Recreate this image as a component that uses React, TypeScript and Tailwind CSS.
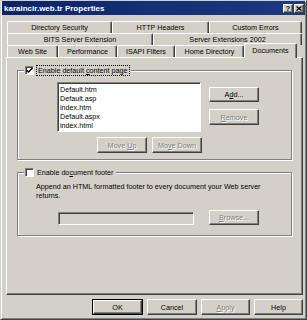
import React from "react";

const raised =
  "border border-t-white border-l-white border-r-[#404040] border-b-[#404040] shadow-[inset_-1px_-1px_0_#808080]";
const sunken =
  "border border-t-[#808080] border-l-[#808080] border-r-white border-b-white shadow-[inset_1px_1px_0_#404040]";
const dis = "text-[#808080] [text-shadow:1px_1px_0_#fff]";

function U({ pre, u, post }: { pre?: string; u?: string; post?: string }) {
  return (
    <span>
      {pre}
      {u ? <span className="underline underline-offset-1">{u}</span> : null}
      {post}
    </span>
  );
}

function Btn({
  children,
  w,
  h,
  disabled,
  def,
}: {
  children: React.ReactNode;
  w: string;
  h: string;
  disabled?: boolean;
  def?: boolean;
}) {
  if (def) {
    return (
      <div className={`${w} ${h} border border-black flex`}>
        <div className={`flex-1 ${raised} flex items-center justify-center`}>{children}</div>
      </div>
    );
  }
  return (
    <div className={`${w} ${h} ${raised} flex items-center justify-center ${disabled ? dis : ""}`}>
      {children}
    </div>
  );
}

function Check({ checked }: { checked?: boolean }) {
  return (
    <div className={`w-[9px] h-[9px] bg-white ${sunken} flex items-center justify-center`}>
      {checked ? (
        <svg width="7" height="7" viewBox="0 0 7 7">
          <path d="M0.5 3 L2.5 5 L6.5 1" stroke="#000" strokeWidth="1.4" fill="none" />
        </svg>
      ) : null}
    </div>
  );
}

function Tab({ label, w, selected }: { label: string; w: string; selected?: boolean }) {
  return (
    <div
      className={`${w} ${
        selected ? "h-[15px] -mt-[2px] relative z-10 bg-[#d4d0c8] pb-[2px]" : "h-[12px]"
      } flex items-center justify-center rounded-t-[2px] border-t border-l border-white border-r border-r-[#404040] shadow-[inset_-1px_0_0_#808080] shrink-0`}
    >
      {label}
    </div>
  );
}

export default function App() {
  return (
    <div className="w-[307px] h-[320px] bg-[#d4d0c8] font-['Liberation_Sans',Arial,sans-serif] text-[7.2px] leading-[9px] text-black border border-t-[#d4d0c8] border-l-[#d4d0c8] border-r-[#404040] border-b-[#404040] shadow-[inset_1px_1px_0_#fff,inset_-1px_-1px_0_#808080] overflow-hidden">
      {/* title bar */}
      <div className="h-[14px] mx-[1px] bg-gradient-to-r from-[#0a246a] to-[#1c3a80] flex items-center justify-between pl-[2px] pr-[1px]">
        <span className="text-white font-bold text-[8px]">karaincir.web.tr Properties</span>
        <div className="flex gap-[1px]">
          <div className={`w-[10px] h-[9px] bg-[#d4d0c8] ${raised} flex items-center justify-center text-[7px] font-bold leading-none`}>
            ?
          </div>
          <div className={`w-[10px] h-[9px] bg-[#d4d0c8] ${raised} flex items-center justify-center`}>
            <svg width="6" height="5" viewBox="0 0 6 5">
              <path d="M0.5 0.5 L5.5 4.5 M5.5 0.5 L0.5 4.5" stroke="#000" strokeWidth="1.3" />
            </svg>
          </div>
        </div>
      </div>

      {/* tabs + panel */}
      <div className="ml-[5px] w-[297px] mt-[6px]">
        <div className="flex pl-[1px]">
          <Tab label="Directory Security" w="w-[105px]" />
          <Tab label="HTTP Headers" w="w-[97px]" />
          <Tab label="Custom Errors" w="w-[93px]" />
        </div>
        <div className="flex pl-[1px]">
          <Tab label="BITS Server Extension" w="w-[146px]" />
          <Tab label="Server Extensions 2002" w="w-[149px]" />
        </div>
        <div className="flex pl-[1px] items-start h-[12px]">
          <Tab label="Web Site" w="w-[51px]" />
          <Tab label="Performance" w="w-[59px]" />
          <Tab label="ISAPI Filters" w="w-[58px]" />
          <Tab label="Home Directory" w="w-[69px]" />
          <Tab label="Documents" w="w-[53px]" selected />
        </div>

        {/* panel */}
        <div className="h-[238px] border border-t-white border-l-white border-r-[#404040] border-b-[#404040] shadow-[inset_-1px_-1px_0_#808080] pt-[7px]">
          {/* group 1 */}
          <fieldset className="mx-[10px] border border-[#808080] shadow-[inset_1px_1px_0_#fff,1px_1px_0_#fff] pb-[6px]">
            <legend className="ml-[6px] px-[1px] flex items-center bg-[#d4d0c8]">
              <Check checked />
              <span className="ml-[2px] px-[1px] h-[11px] flex items-center border border-dotted border-black">
                <U pre="Enable default " u="c" post="ontent page" />
              </span>
            </legend>
            <div className="flex mt-[6px]">
              <div className={`ml-[39px] w-[144px] h-[50px] bg-white ${sunken} pl-[2px] pt-[2px]`}>
                <div>Default.htm</div>
                <div>Default.asp</div>
                <div>index.htm</div>
                <div>Default.aspx</div>
                <div>index.html</div>
              </div>
              <div className="ml-[8px] flex flex-col">
                <div className="mt-[5px]">
                  <Btn w="w-[50px]" h="h-[15px]">
                    <U pre="A" u="d" post="d..." />
                  </Btn>
                </div>
                <div className="mt-[7px]">
                  <Btn w="w-[50px]" h="h-[16px]" disabled>
                    <U u="R" post="emove" />
                  </Btn>
                </div>
              </div>
            </div>
            <div className="flex gap-[5px] ml-[79px] mt-[5px]">
              <Btn w="w-[50px]" h="h-[16px]" disabled>
                <U pre="Move " u="U" post="p" />
              </Btn>
              <Btn w="w-[50px]" h="h-[16px]" disabled>
                <U pre="Mo" u="v" post="e Down" />
              </Btn>
            </div>
          </fieldset>

          {/* group 2 */}
          <fieldset className="mx-[10px] mt-[7px] border border-[#808080] shadow-[inset_1px_1px_0_#fff,1px_1px_0_#fff] pb-[10px]">
            <legend className="ml-[6px] px-[1px] flex items-center bg-[#d4d0c8]">
              <Check />
              <span className="ml-[3px] pr-[2px] h-[11px] flex items-center">
                <U pre="Enable do" u="c" post="ument footer" />
              </span>
            </legend>
            <p className="ml-[18px] mt-[4px]">
              Append an HTML formatted footer to every document your Web server
              <br />
              returns.
            </p>
            <div className="flex items-start mt-[10px]">
              <div className={`ml-[40px] mt-[2px] w-[136px] h-[13px] bg-[#d4d0c8] ${sunken}`} />
              <div className="ml-[15px]">
                <Btn w="w-[50px]" h="h-[15px]" disabled>
                  <U u="B" post="rowse..." />
                </Btn>
              </div>
            </div>
          </fieldset>
        </div>
      </div>

      {/* bottom buttons */}
      <div className="flex justify-end gap-[4px] pr-[3px] mt-[4px]">
        <Btn w="w-[51px]" h="h-[16px]" def>
          OK
        </Btn>
        <Btn w="w-[50px]" h="h-[16px]">Cancel</Btn>
        <Btn w="w-[49px]" h="h-[16px]" disabled>
          <U u="A" post="pply" />
        </Btn>
        <Btn w="w-[49px]" h="h-[16px]">Help</Btn>
      </div>
    </div>
  );
}
